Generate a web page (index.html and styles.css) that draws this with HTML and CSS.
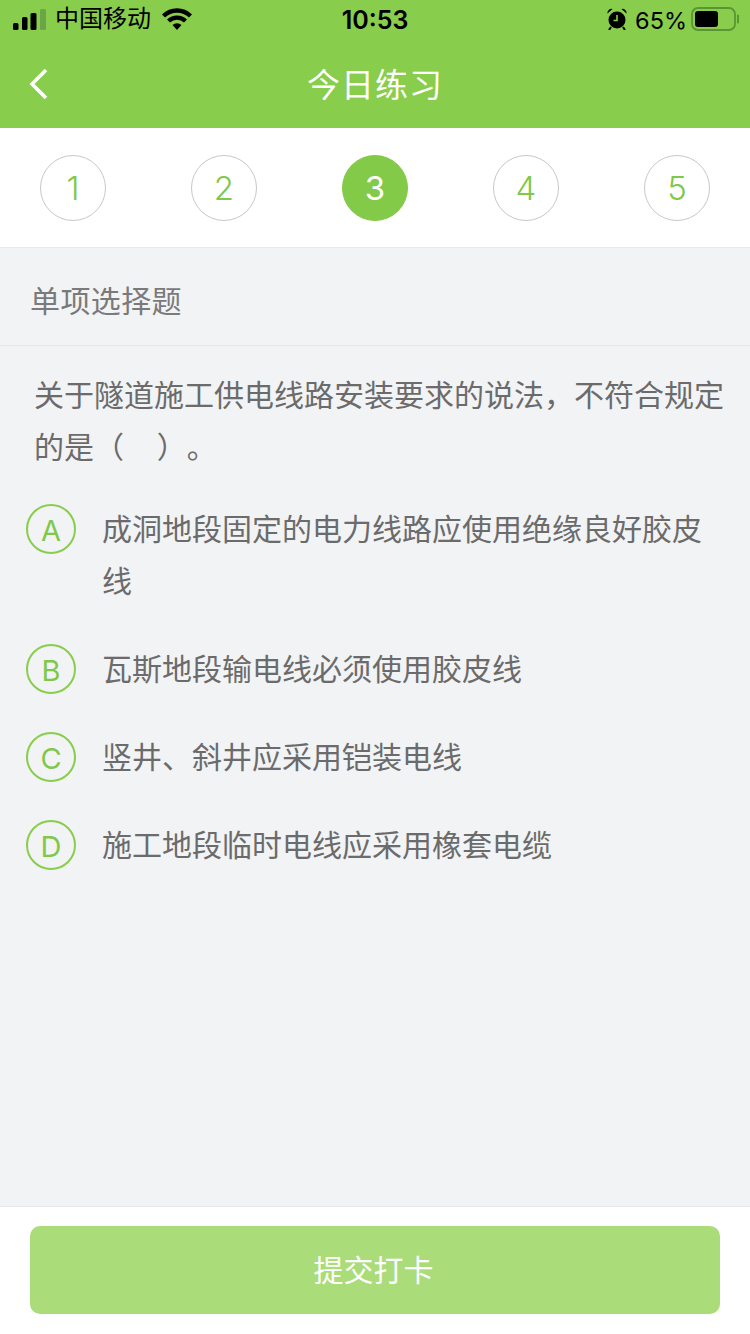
FILE: index.html
```html
<!DOCTYPE html>
<html lang="zh-CN">
<head>
    <meta charset="UTF-8">
    <meta name="viewport" content="width=device-width, initial-scale=1.0">
    <title>今日练习</title>
    <link rel="stylesheet" href="styles.css">
</head>

<body>
    <div class="page">
        <header class="top">
            <div class="status">
                <div class="status-left">
                    <svg class="signal" width="34" height="22" viewBox="0 0 34 22">
                        <rect x="0" y="14" width="5.500" height="7" rx="1.500" fill="#000"/>
                        <rect x="9" y="8" width="5.500" height="13" rx="1.500" fill="#000"/>
                        <rect x="17.500" y="4" width="6" height="17" rx="1.500" fill="#000"/>
                        <rect x="27" y="0" width="6" height="21" rx="1.500" fill="#6aa548"/>
                    </svg>
                    <span class="carrier">中国移动</span>
                    <svg class="wifi" width="30" height="22" viewBox="0 0 30 22">
                        <path d="M1.500 8a19.500 19.500 0 0 1 27 0" fill="none" stroke="#000" stroke-width="4.400"/>
                        <path d="M6.500 13a12.500 12.500 0 0 1 17 0" fill="none" stroke="#000" stroke-width="4.400"/>
                        <path d="M10.500 17a6.800 6.800 0 0 1 9 0L15 22z" fill="#000"/>
                    </svg>
                </div>
                <div class="status-time">10:53</div>
                <div class="status-right">
                    <svg class="alarm" width="20" height="22" viewBox="0 0 20 22">
                        <circle cx="10" cy="12" r="8.500" fill="#000"/>
                        <path d="M0.500 5.500a4 4 0 0 1 5-4.500zM19.500 5.500a4 4 0 0 0-5-4.500z" fill="#000"/>
                        <path d="M4 19l-2 3M16 19l2 3" stroke="#000" stroke-width="2"/>
                        <path d="M10 7v5.500H6.500" fill="none" stroke="#8acd4c" stroke-width="1.600"/>
                    </svg>
                    <span class="battery-pct">65%</span>
                    <svg class="battery" width="48" height="24" viewBox="0 0 48 24">
                        <rect x="1" y="1" width="43" height="22" rx="6" fill="none" stroke="#5c9535" stroke-width="1.800"/>
                        <rect x="4" y="4" width="23" height="16" rx="3" fill="#000"/>
                        <path d="M46 7.500a4.500 4.500 0 0 1 0 9z" fill="#5c9535"/>
                    </svg>
                </div>
            </div>
            <div class="nav">
                <svg class="back" width="22" height="34" viewBox="0 0 22 34">
                    <path d="M18 3L4 17l14 14" fill="none" stroke="#fff" stroke-width="3.600"/>
                </svg>
                <h1 class="nav-title">今日练习</h1>
            </div>
        </header>

        <div class="steps">
            <div class="step">1</div>
            <div class="step">2</div>
            <div class="step step-on">3</div>
            <div class="step">4</div>
            <div class="step">5</div>
        </div>

        <main class="body">
            <div class="type">单项选择题</div>
            <p class="question">关于隧道施工供电线路安装要求的说法，不符合规定的是（&nbsp;&nbsp;&nbsp;&#8197;）&#8203;。</p>
            <ul class="options">
                <li class="option"><span class="letter">A</span><span class="option-text">成洞地段固定的电力线路应使用绝缘良好胶皮线</span></li>
                <li class="option"><span class="letter">B</span><span class="option-text">瓦斯地段输电线必须使用胶皮线</span></li>
                <li class="option"><span class="letter">C</span><span class="option-text">竖井、斜井应采用铠装电线</span></li>
                <li class="option"><span class="letter">D</span><span class="option-text">施工地段临时电线应采用橡套电缆</span></li>
            </ul>
        </main>

        <footer class="foot">
            <button class="submit" type="button">提交打卡</button>
        </footer>
    </div>
</body>
</html>
```

FILE: styles.css
```css
* {
    box-sizing: border-box;
}
body {
    margin: 0;
    padding: 0;
    background-color: #f2f3f5;
    font-family: Inter, "Noto Sans CJK SC", sans-serif;
}
.page {
    width: 750px;
    height: 1334px;
    display: flex;
    flex-direction: column;
    overflow: hidden;
}

/* green header */
.top {
    height: 128px;
    background-color: #88cd4b;
}
.status {
    height: 40px;
    padding: 0 11px;
    display: flex;
    align-items: center;
    color: #000;
}
.status-left,
.status-right {
    flex: 1;
    display: flex;
    align-items: center;
}
.status-right {
    justify-content: flex-end;
}
.signal {
    margin: 0 8px 0 2px;
}
.carrier {
    font-size: 24px;
    line-height: 28px;
    margin: -2px 11px 0 0;
}
.wifi {
    margin-top: -2px;
}
.status-time {
    font-size: 25px;
    font-weight: 600;
}
.alarm {
    margin: -2px 8px 0 0;
}
.battery-pct {
    font-size: 23.500px;
    margin-right: 4px;
}
.battery {
    margin-top: -2px;
}
.nav {
    height: 88px;
    padding-bottom: 3px;
    position: relative;
    display: flex;
    align-items: center;
    justify-content: center;
}
.back {
    position: absolute;
    left: 28px;
    top: 27px;
}
.nav-title {
    margin: 0;
    font-size: 33px;
    font-weight: 400;
    letter-spacing: 1px;
    color: #fff;
}

/* question numbers */
.steps {
    height: 120px;
    padding: 27px 40px 0;
    display: flex;
    justify-content: space-between;
    background-color: #fff;
    border-bottom: 1px solid #e8e8e8;
}
.step {
    width: 66px;
    height: 66px;
    border: 1px solid #c8c8c8;
    border-radius: 50%;
    display: flex;
    align-items: center;
    justify-content: center;
    font-size: 33px;
    font-weight: 300;
    color: #80c84a;
}
.step-on {
    background-color: #82ca48;
    border-color: #82ca48;
    color: #fff;
    font-weight: 400;
}

/* question */
.body {
    flex: 1;
}
.type {
    height: 98px;
    padding: 0 30px;
    line-height: 106px;
    font-size: 30px;
    letter-spacing: 0.400px;
    color: #7a7a7a;
    border-bottom: 1px solid #e6e6e6;
}
.question {
    margin: 23px 0 31px;
    padding: 0 24px 0 34px;
    font-size: 30px;
    line-height: 52px;
    color: #6b6b6b;
}
.options {
    list-style: none;
    margin: 0;
    padding: 0 40px 0 26px;
}
.option {
    display: flex;
    margin-bottom: 36px;
}
.letter {
    flex: none;
    width: 50px;
    height: 50px;
    margin-right: 26px;
    padding-top: 2px;
    border: 2px solid #88cd4b;
    border-radius: 50%;
    display: flex;
    align-items: center;
    justify-content: center;
    font-size: 29px;
    color: #80c84a;
}
.option-text {
    margin-top: -1px;
    padding-bottom: 1px;
    font-size: 30px;
    line-height: 52px;
    color: #6b6b6b;
}

/* bottom button */
.foot {
    height: 128px;
    padding: 19px 30px 0;
    background-color: #fff;
    border-top: 1px solid #e8e8ec;
}
.submit {
    display: block;
    width: 100%;
    height: 88px;
    padding: 0 3px 4px 0;
    border: 0;
    border-radius: 10px;
    background-color: #aadc7a;
    color: #fff;
    font-family: "Noto Sans CJK SC", sans-serif;
    font-size: 30px;
}
```
